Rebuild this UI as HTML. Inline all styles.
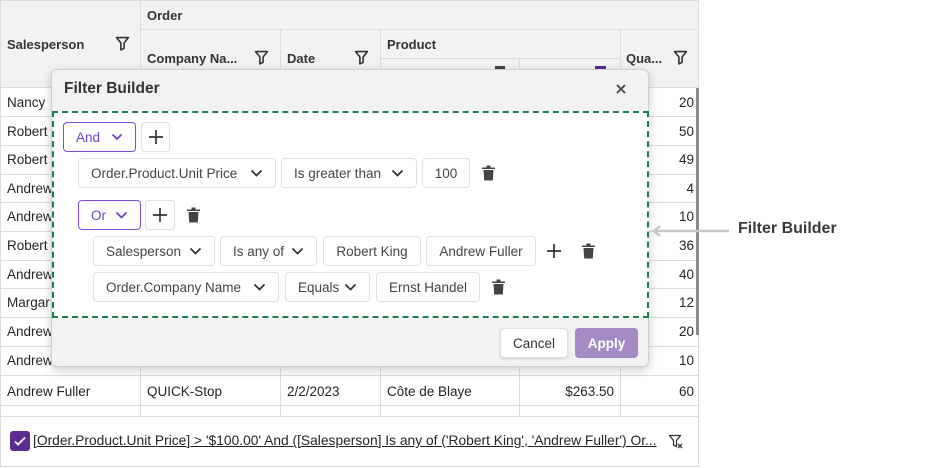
<!DOCTYPE html>
<html><head><meta charset="utf-8"><style>
*{box-sizing:border-box;margin:0;padding:0}
body{width:950px;height:468px;background:#fff;font-family:"Liberation Sans",sans-serif;font-size:13px;color:#242424;position:relative;overflow:hidden}
.a{position:absolute}
.hd{background:#f2f2f2}
.vl{position:absolute;width:1px;background:#dcdcdc}
.hl{position:absolute;height:1px;background:#dcdcdc}
.ht{position:absolute;font-size:13px;font-weight:bold;color:#333}
.t{position:absolute;font-size:13.5px}
.btn{position:absolute;border:1px solid #e0e0e0;border-radius:4px;background:#fff;height:30px;font-size:13.5px;color:#444;padding:0 12px;white-space:nowrap;display:flex;align-items:center;justify-content:space-between}
.c{justify-content:center}
.sel{border-color:#7a4bd6;color:#6f42c1}
.ic{position:absolute}
</style></head><body>
<div class="a hd" style="left:0;top:0;width:699px;height:88px;border:1px solid #dcdcdc;border-bottom:none"></div>
<div class="vl" style="left:140px;top:0;height:88px"></div>
<div class="hl" style="left:140px;top:29px;width:559px"></div>
<div class="vl" style="left:280px;top:29px;height:59px"></div>
<div class="vl" style="left:380px;top:29px;height:59px"></div>
<div class="hl" style="left:380px;top:58px;width:240px"></div>
<div class="vl" style="left:519px;top:58px;height:30px"></div>
<div class="vl" style="left:620px;top:29px;height:59px"></div>
<div class="hl" style="left:0;top:87px;width:699px"></div>
<div class="ht" style="left:7px;top:37px">Salesperson</div>
<div class="ht" style="left:147px;top:8px">Order</div>
<div class="ht" style="left:147px;top:51px">Company Na...</div>
<div class="ht" style="left:287px;top:51px">Date</div>
<div class="ht" style="left:387px;top:37px">Product</div>
<div class="ht" style="left:626px;top:51px">Qua...</div>
<svg class="ic" style="left:115px;top:36px" width="15" height="15" viewBox="0 0 14 14"><path d="M1.5 1.5h11l-4 5v5l-3 1.5v-6.5z" fill="none" stroke="#333" stroke-width="1.5" stroke-linejoin="round"/></svg>
<svg class="ic" style="left:254px;top:50px" width="15" height="15" viewBox="0 0 14 14"><path d="M1.5 1.5h11l-4 5v5l-3 1.5v-6.5z" fill="none" stroke="#333" stroke-width="1.5" stroke-linejoin="round"/></svg>
<svg class="ic" style="left:354px;top:50px" width="15" height="15" viewBox="0 0 14 14"><path d="M1.5 1.5h11l-4 5v5l-3 1.5v-6.5z" fill="none" stroke="#333" stroke-width="1.5" stroke-linejoin="round"/></svg>
<svg class="ic" style="left:673px;top:50px" width="15" height="15" viewBox="0 0 14 14"><path d="M1.5 1.5h11l-4 5v5l-3 1.5v-6.5z" fill="none" stroke="#333" stroke-width="1.5" stroke-linejoin="round"/></svg>
<div class="a" style="left:495px;top:66px;width:10px;height:3px;background:#444"></div>
<div class="a" style="left:595px;top:66px;width:11px;height:3px;background:#5c2d91"></div>
<div class="a" style="left:0;top:88px;width:699px;height:328px;border-left:1px solid #dcdcdc;border-right:1px solid #dcdcdc"></div>
<div class="vl" style="left:140px;top:88px;height:328px"></div>
<div class="vl" style="left:280px;top:88px;height:328px"></div>
<div class="vl" style="left:380px;top:88px;height:328px"></div>
<div class="vl" style="left:519px;top:88px;height:328px"></div>
<div class="vl" style="left:620px;top:88px;height:328px"></div>
<div class="hl" style="left:0;top:116px;width:699px"></div>
<div class="hl" style="left:0;top:145px;width:699px"></div>
<div class="hl" style="left:0;top:174px;width:699px"></div>
<div class="hl" style="left:0;top:202px;width:699px"></div>
<div class="hl" style="left:0;top:231px;width:699px"></div>
<div class="hl" style="left:0;top:260px;width:699px"></div>
<div class="hl" style="left:0;top:288px;width:699px"></div>
<div class="hl" style="left:0;top:317px;width:699px"></div>
<div class="hl" style="left:0;top:346px;width:699px"></div>
<div class="hl" style="left:0;top:375px;width:699px"></div>
<div class="hl" style="left:0;top:405px;width:699px"></div>
<div class="t" style="left:7px;top:95px">Nancy</div>
<div class="t" style="left:7px;top:124px">Robert</div>
<div class="t" style="left:7px;top:152px">Robert</div>
<div class="t" style="left:7px;top:181px">Andrew</div>
<div class="t" style="left:7px;top:209px">Andrew</div>
<div class="t" style="left:7px;top:238px">Robert</div>
<div class="t" style="left:7px;top:267px">Andrew</div>
<div class="t" style="left:7px;top:295px">Margar</div>
<div class="t" style="left:7px;top:324px">Andrew</div>
<div class="t" style="left:7px;top:353px">Andrew</div>
<div class="t" style="left:7px;top:384px">Andrew Fuller</div>
<div class="t" style="left:147px;top:384px">QUICK-Stop</div>
<div class="t" style="left:287px;top:384px">2/2/2023</div>
<div class="t" style="left:387px;top:384px">Côte de Blaye</div>
<div class="t" style="left:520px;top:384px;width:94px;text-align:right">$263.50</div>
<div class="t" style="left:620px;top:95px;width:74px;text-align:right">20</div>
<div class="t" style="left:620px;top:124px;width:74px;text-align:right">50</div>
<div class="t" style="left:620px;top:152px;width:74px;text-align:right">49</div>
<div class="t" style="left:620px;top:181px;width:74px;text-align:right">4</div>
<div class="t" style="left:620px;top:209px;width:74px;text-align:right">10</div>
<div class="t" style="left:620px;top:238px;width:74px;text-align:right">36</div>
<div class="t" style="left:620px;top:267px;width:74px;text-align:right">40</div>
<div class="t" style="left:620px;top:295px;width:74px;text-align:right">12</div>
<div class="t" style="left:620px;top:324px;width:74px;text-align:right">20</div>
<div class="t" style="left:620px;top:353px;width:74px;text-align:right">10</div>
<div class="t" style="left:620px;top:384px;width:74px;text-align:right">60</div>
<div class="a" style="left:696px;top:88px;width:3px;height:247px;background:#8a8a8a"></div>
<div class="a" style="left:0;top:416px;width:699px;height:51px;background:#fff;border:1px solid #dcdcdc"></div>
<div class="a" style="left:10px;top:431px;width:20px;height:20px;background:#5c2d91;border-radius:3px"></div>
<svg class="ic" style="left:13px;top:434px" width="14" height="14" viewBox="0 0 14 14"><path d="M2 7.5l3 3 7-7" fill="none" stroke="#fff" stroke-width="1.8"/></svg>
<div class="t" style="left:33px;top:433px;font-size:13.8px;text-decoration:underline;white-space:nowrap;color:#242424">[Order.Product.Unit Price] &gt; '$100.00' And ([Salesperson] Is any of ('Robert King', 'Andrew Fuller') Or...</div>
<svg class="ic" style="left:668px;top:434px" width="16" height="16" viewBox="0 0 16 16"><path d="M1.5 1.5h11l-4 5v6l-3-1.5v-4.5z" fill="none" stroke="#333" stroke-width="1.3" stroke-linejoin="round"/><path d="M10 10l4 4M14 10l-4 4" stroke="#333" stroke-width="1.3"/></svg>
<div class="a" style="left:51px;top:69px;width:598px;height:298px;background:#f2f2f2;border:1px solid #d0d0d0;border-radius:6px;box-shadow:0 3px 10px rgba(0,0,0,.2)"></div>
<div class="a" style="left:64px;top:80px;font-size:15.5px;font-weight:bold;color:#333">Filter Builder</div>
<svg class="ic" style="left:616px;top:84px" width="10" height="10" viewBox="0 0 10 10"><path d="M1 1l8 8M9 1l-8 8" stroke="#444" stroke-width="1.8"/></svg>
<div class="a" style="left:52px;top:111px;width:597px;height:207px;background:#fff;border:2px dashed #1a7f4b"></div>
<div class="btn sel" style="left:63px;top:122px;width:73px">And<svg width="12" height="8" viewBox="0 0 12 8"><path d="M1.5 1.5l4.5 4.5 4.5-4.5" fill="none" stroke="#6f42c1" stroke-width="1.8"/></svg></div>
<div class="btn" style="left:141px;top:122px;width:29px"></div>
<svg class="ic" style="left:148px;top:129px" width="16" height="16" viewBox="0 0 16 16"><path d="M8 1v14M1 8h14" stroke="#333" stroke-width="1.7"/></svg>
<div class="btn" style="left:78px;top:158px;width:198px">Order.Product.Unit Price<svg width="13" height="8" viewBox="0 0 13 8"><path d="M1.5 1.5l5 5 5-5" fill="none" stroke="#333" stroke-width="1.8"/></svg></div>
<div class="btn" style="left:281px;top:158px;width:136px">Is greater than<svg width="13" height="8" viewBox="0 0 13 8"><path d="M1.5 1.5l5 5 5-5" fill="none" stroke="#333" stroke-width="1.8"/></svg></div>
<div class="btn c" style="left:422px;top:158px;width:48px">100</div>
<svg class="ic" style="left:482px;top:165px" width="13" height="16" viewBox="0 0 13 16"><path d="M0 2.5h13v1.5H0zM4.5 0.5h4v2h-4zM1.5 5h10l-0.7 10.5H2.2z" fill="#444"/></svg>
<div class="btn sel" style="left:78px;top:200px;width:63px">Or<svg width="13" height="8" viewBox="0 0 13 8"><path d="M1.5 1.5l5 5 5-5" fill="none" stroke="#6f42c1" stroke-width="1.8"/></svg></div>
<div class="btn" style="left:145px;top:200px;width:30px"></div>
<svg class="ic" style="left:152px;top:207px" width="16" height="16" viewBox="0 0 16 16"><path d="M8 1v14M1 8h14" stroke="#333" stroke-width="1.7"/></svg>
<svg class="ic" style="left:187px;top:207px" width="13" height="16" viewBox="0 0 13 16"><path d="M0 2.5h13v1.5H0zM4.5 0.5h4v2h-4zM1.5 5h10l-0.7 10.5H2.2z" fill="#444"/></svg>
<div class="btn" style="left:93px;top:236px;width:122px">Salesperson<svg width="13" height="8" viewBox="0 0 13 8"><path d="M1.5 1.5l5 5 5-5" fill="none" stroke="#333" stroke-width="1.8"/></svg></div>
<div class="btn" style="left:220px;top:236px;width:97px">Is any of<svg width="13" height="8" viewBox="0 0 13 8"><path d="M1.5 1.5l5 5 5-5" fill="none" stroke="#333" stroke-width="1.8"/></svg></div>
<div class="btn c" style="left:323px;top:236px;width:98px">Robert King</div>
<div class="btn c" style="left:426px;top:236px;width:110px">Andrew Fuller</div>
<svg class="ic" style="left:546px;top:243px" width="16" height="16" viewBox="0 0 16 16"><path d="M8 1v14M1 8h14" stroke="#333" stroke-width="1.7"/></svg>
<svg class="ic" style="left:582px;top:243px" width="13" height="16" viewBox="0 0 13 16"><path d="M0 2.5h13v1.5H0zM4.5 0.5h4v2h-4zM1.5 5h10l-0.7 10.5H2.2z" fill="#444"/></svg>
<div class="btn" style="left:93px;top:272px;width:186px">Order.Company Name<svg width="13" height="8" viewBox="0 0 13 8"><path d="M1.5 1.5l5 5 5-5" fill="none" stroke="#333" stroke-width="1.8"/></svg></div>
<div class="btn" style="left:285px;top:272px;width:85px">Equals<svg width="13" height="8" viewBox="0 0 13 8"><path d="M1.5 1.5l5 5 5-5" fill="none" stroke="#333" stroke-width="1.8"/></svg></div>
<div class="btn c" style="left:376px;top:272px;width:104px">Ernst Handel</div>
<svg class="ic" style="left:492px;top:279px" width="13" height="16" viewBox="0 0 13 16"><path d="M0 2.5h13v1.5H0zM4.5 0.5h4v2h-4zM1.5 5h10l-0.7 10.5H2.2z" fill="#444"/></svg>
<div class="btn c" style="left:500px;top:328px;width:68px;color:#333;box-shadow:0 1px 2px rgba(0,0,0,.15)">Cancel</div>
<div class="btn c" style="left:575px;top:328px;width:63px;background:#a58bc4;border-color:#a58bc4;color:#fff;font-weight:bold">Apply</div>
<svg class="ic" style="left:650px;top:224px" width="80" height="14" viewBox="0 0 80 14"><path d="M4 7h75" stroke="#c8c8c8" stroke-width="2.5"/><path d="M10 2l-6 5 6 5" fill="none" stroke="#c8c8c8" stroke-width="2.5"/></svg>
<div class="a" style="left:738px;top:220px;font-size:16px;font-weight:bold;color:#3a3a3a">Filter Builder</div>
</body></html>
